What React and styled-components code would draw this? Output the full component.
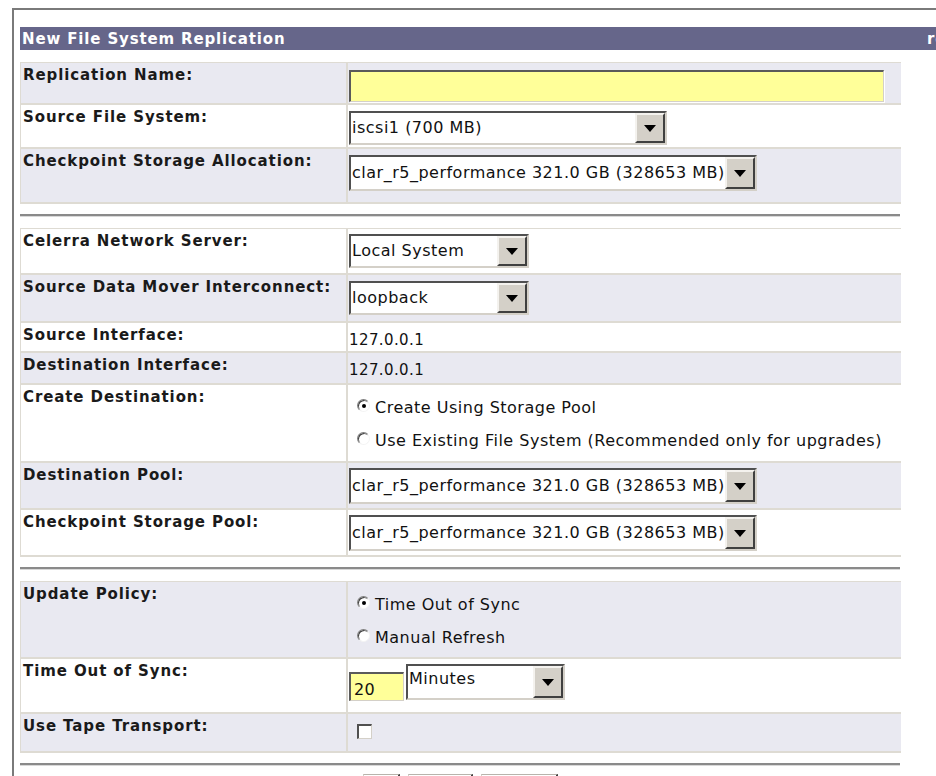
import React from "react";
import styled, { createGlobalStyle } from "styled-components";

const GlobalStyle = createGlobalStyle`
  body {
    margin: 0;
    background: #fff;
    overflow: hidden;
    font-family: "DejaVu Sans", Verdana, sans-serif;
  }
`;

const Frame = styled.div`
  margin: 8px 0 0 12px;
  border-top: 2px solid #7a7a7a;
  border-left: 2px solid #7a7a7a;
  padding: 17px 0 0 6px;
  min-height: 100vh;
`;

const Header = styled.div`
  display: grid;
  grid-template-columns: 905px max-content;
  width: 1000px;
  height: 23px;
  align-items: center;
  background: #66668a;
  color: #fff;
  font-size: 15px;
  font-weight: bold;
  letter-spacing: 0.85px;
  padding-left: 2px;
  box-sizing: border-box;
  white-space: nowrap;
`;

const Group = styled.div`
  width: 880px;
  border-top: 1px solid #dedbd3;
  border-left: 1px solid #dedbd3;
  margin-top: ${({ $top }) => $top || 0}px;
`;

const Row = styled.div`
  display: grid;
  grid-template-columns: 325px 1fr;
  column-gap: 2px;
  height: ${({ $h }) => $h}px;
  box-sizing: border-box;
  border-bottom: 2px solid #dedbd3;
  background: #dedbd3;
`;

const Label = styled.div`
  background: ${({ $shade }) => ($shade ? "#e9e9f1" : "#fff")};
  padding: 3px 2px 0;
  font-size: 15px;
  line-height: 18px;
  font-weight: bold;
  letter-spacing: 0.9px;
  color: #1a1a1a;
  white-space: nowrap;
`;

const Value = styled.div`
  background: ${({ $shade }) => ($shade ? "#e9e9f1" : "#fff")};
  padding: ${({ $pt }) => $pt ?? 6}px 0 0 1px;
  font-size: 15px;
  line-height: 18px;
  letter-spacing: 0.4px;
  color: #111;
  white-space: nowrap;
`;

const TextInput = styled.div`
  width: ${({ $w }) => $w}px;
  height: ${({ $h }) => $h}px;
  margin-top: ${({ $mt }) => $mt || 0}px;
  box-sizing: border-box;
  background: #ffff99;
  border-top: 2px solid #5a5a5a;
  border-left: 2px solid #5a5a5a;
  border-right: 1px solid #d4d0c8;
  border-bottom: 1px solid #d4d0c8;
  box-shadow: 1px 1px 0 #fff;
  display: flex;
  align-items: flex-end;
  padding: 0 0 1px 3px;
  font-size: 16px;
  line-height: 18px;
`;

const SelectBox = styled.div`
  display: inline-flex;
  width: ${({ $w }) => $w}px;
  height: ${({ $h }) => $h || 34}px;
  box-sizing: border-box;
  background: #fff;
  border-top: 2px solid #505050;
  border-left: 2px solid #505050;
  border-right: 2px solid #d4d0c8;
  border-bottom: 2px solid #d4d0c8;
  vertical-align: top;
`;

const SelectText = styled.div`
  flex: 1;
  display: flex;
  align-items: ${({ $top }) => ($top ? "flex-start" : "center")};
  padding: ${({ $top }) => ($top ? "4px 0 0 1px" : "0 0 0 1px")};
  font-size: 16px;
  letter-spacing: 0.5px;
  color: #111;
  overflow: hidden;
  white-space: nowrap;
`;

const ArrowButton = styled.div`
  width: 30px;
  flex-shrink: 0;
  box-sizing: border-box;
  background: #d4d0c8;
  border-top: 2px solid #f4f2ee;
  border-left: 2px solid #f4f2ee;
  border-right: 2px solid #404040;
  border-bottom: 2px solid #404040;
  display: flex;
  align-items: center;
  justify-content: center;
`;

const Triangle = styled.span`
  width: 0;
  height: 0;
  border-left: 6px solid transparent;
  border-right: 6px solid transparent;
  border-top: 7px solid #000;
`;

const Select = ({ w, h, top, children }) => (
  <SelectBox $w={w} $h={h}>
    <SelectText $top={top}>{children}</SelectText>
    <ArrowButton>
      <Triangle />
    </ArrowButton>
  </SelectBox>
);

const Options = styled.div`
  display: flex;
  flex-direction: column;
  gap: 15px;
  padding: 14px 0 0 8px;
  font-size: 16px;
  letter-spacing: 0.5px;
`;

const Option = styled.label`
  display: flex;
  align-items: center;
  gap: 5px;
`;

/* classic sunken radio: dark upper-left arc, white lower-right */
const RadioDot = styled.span`
  width: 13px;
  height: 13px;
  flex-shrink: 0;
  border-radius: 50%;
  box-sizing: border-box;
  background: #fff;
  border: 1px solid;
  border-color: #808080 #f4f4f4 #f4f4f4 #808080;
  box-shadow: inset 1px 1px 0 #404040;
  display: flex;
  align-items: center;
  justify-content: center;
  margin-top: -5px;

  &::after {
    content: "";
    width: 4px;
    height: 4px;
    border-radius: 50%;
    background: ${({ $on }) => ($on ? "#000" : "transparent")};
  }
`;

const Radio = ({ on, children }) => (
  <Option>
    <RadioDot $on={on} />
    {children}
  </Option>
);

const Checkbox = styled.span`
  display: block;
  width: 15px;
  height: 15px;
  margin: 10px 0 0 8px;
  box-sizing: border-box;
  background: #fff;
  border-top: 2px solid #505050;
  border-left: 2px solid #505050;
  border-right: 1px solid #d4d0c8;
  border-bottom: 1px solid #d4d0c8;
`;

const Inline = styled.div`
  display: flex;
  align-items: flex-start;
  gap: 2px;
`;

const Rule = styled.div`
  width: 880px;
  height: 2px;
  margin: 10px 0 11px;
  background: #8a8a8a;
  border-bottom: 1px solid #d8d8d8;
`;

const ButtonBar = styled.div`
  display: flex;
  gap: 8px;
  padding-left: 343px;
  margin-top: -3px;
`;

const Button = styled.div`
  width: ${({ $w }) => $w}px;
  height: 30px;
  box-sizing: border-box;
  background: #d4d0c8;
  border-top: 1px solid #b8b4ac;
  border-left: 1px solid #d4d0c8;
  border-right: 2px solid #404040;
  border-bottom: 2px solid #404040;
  box-shadow: inset 1px 1px 0 #fff;
`;

const RowItem = ({ label, h, shade, pt, children }) => (
  <Row $h={h}>
    <Label $shade={shade}>{label}</Label>
    <Value $shade={shade} $pt={pt}>
      {children}
    </Value>
  </Row>
);

const bigPool = "clar_r5_performance 321.0 GB (328653 MB)";

export default function App() {
  return (
    <>
      <GlobalStyle />
      <Frame>
        <Header>
          <span>New File System Replication</span>
          <span>required fields</span>
        </Header>

        <Group $top={12}>
          <RowItem label="Replication Name:" h={42} shade pt={7}>
            <TextInput $w={535} $h={32} />
          </RowItem>
          <RowItem label="Source File System:" h={44}>
            <Select w={318}>iscsi1 (700 MB)</Select>
          </RowItem>
          <RowItem label="Checkpoint Storage Allocation:" h={55} shade pt={6}>
            <Select w={408} h={36}>
              {bigPool}
            </Select>
          </RowItem>
        </Group>

        <Rule />

        <Group>
          <RowItem label="Celerra Network Server:" h={46} pt={5}>
            <Select w={180}>Local System</Select>
          </RowItem>
          <RowItem label="Source Data Mover Interconnect:" h={48} shade pt={6}>
            <Select w={180}>loopback</Select>
          </RowItem>
          <RowItem label="Source Interface:" h={30} pt={8}>
            127.0.0.1
          </RowItem>
          <RowItem label="Destination Interface:" h={32} shade pt={8}>
            127.0.0.1
          </RowItem>
          <RowItem label="Create Destination:" h={78} pt={0}>
            <Options>
              <Radio on>Create Using Storage Pool</Radio>
              <Radio>Use Existing File System (Recommended only for upgrades)</Radio>
            </Options>
          </RowItem>
          <RowItem label="Destination Pool:" h={47} shade pt={5}>
            <Select w={408} h={36}>
              {bigPool}
            </Select>
          </RowItem>
          <RowItem label="Checkpoint Storage Pool:" h={47} pt={5}>
            <Select w={408} h={36}>
              {bigPool}
            </Select>
          </RowItem>
        </Group>

        <Rule />

        <Group>
          <RowItem label="Update Policy:" h={77} shade pt={0}>
            <Options>
              <Radio on>Time Out of Sync</Radio>
              <Radio>Manual Refresh</Radio>
            </Options>
          </RowItem>
          <RowItem label="Time Out of Sync:" h={55} pt={5}>
            <Inline>
              <TextInput $w={55} $h={29} $mt={8}>
                20
              </TextInput>
              <Select w={159} h={36} top>
                Minutes
              </Select>
            </Inline>
          </RowItem>
          <RowItem label="Use Tape Transport:" h={39} shade pt={0}>
            <Checkbox />
          </RowItem>
        </Group>

        <Rule />

        <ButtonBar>
          <Button $w={37} />
          <Button $w={65} />
          <Button $w={77} />
        </ButtonBar>
      </Frame>
    </>
  );
}
